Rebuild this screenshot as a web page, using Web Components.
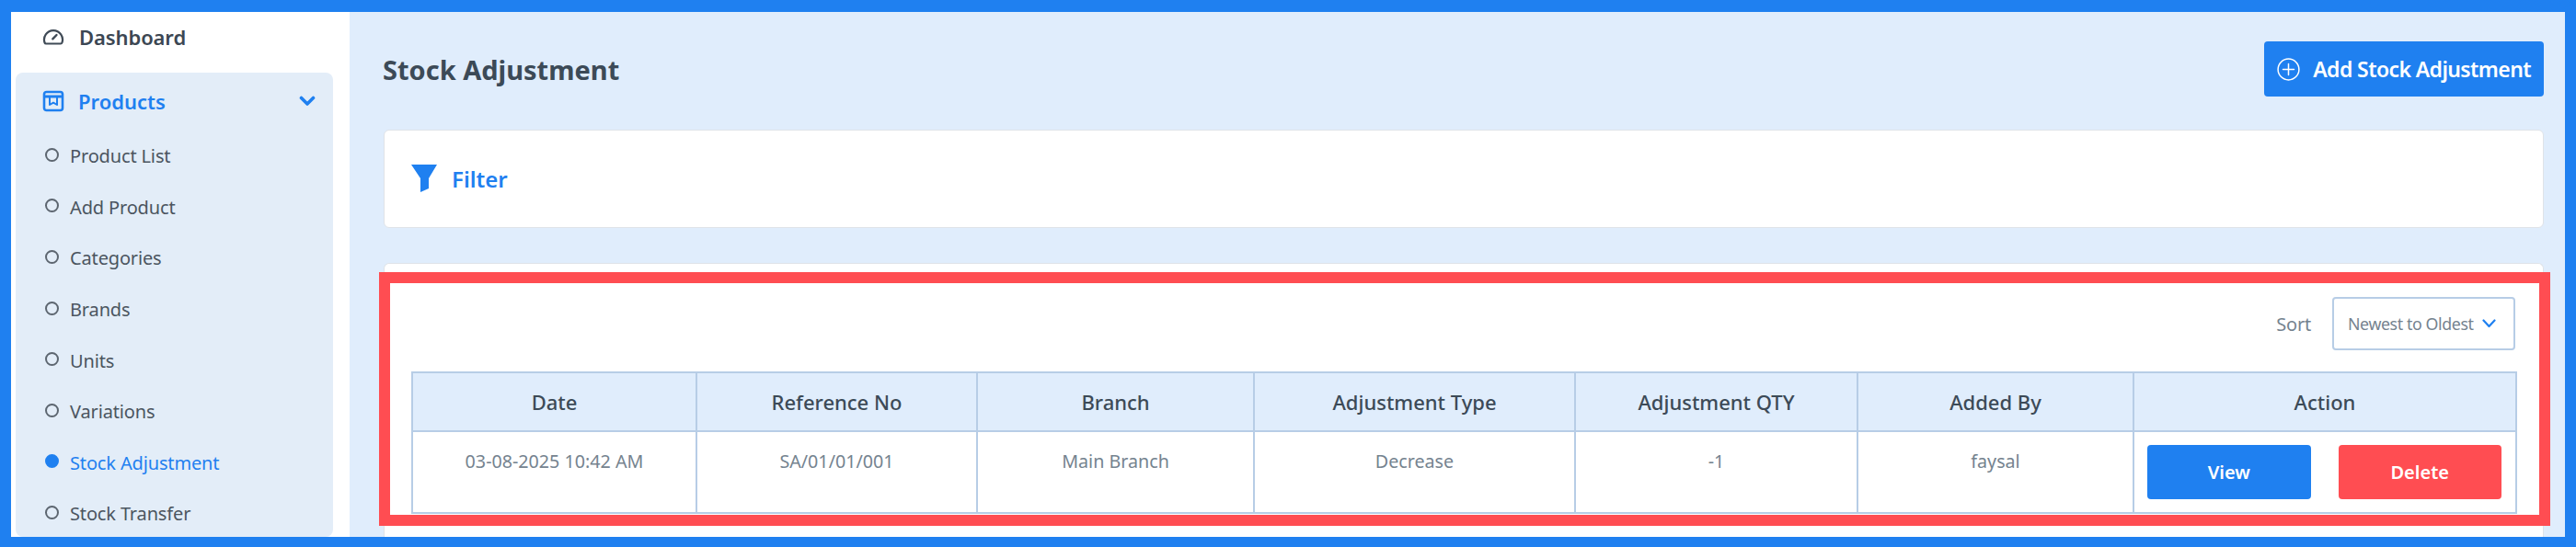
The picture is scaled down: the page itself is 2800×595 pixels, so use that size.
<!DOCTYPE html>
<html>
<head>
<meta charset="utf-8">
<title>Stock Adjustment</title>
<style>
  html, body { margin: 0; height: 100%; overflow: hidden; background: #1f80f0; }
  body { font-family: "Noto Sans", "Open Sans", sans-serif; }
</style>
</head>
<body>

<app-shell>
  <side-bar slot="side">
    <nav-link icon="gauge">Dashboard</nav-link>
    <nav-group label="Products">
      <sub-link>Product List</sub-link>
      <sub-link>Add Product</sub-link>
      <sub-link>Categories</sub-link>
      <sub-link>Brands</sub-link>
      <sub-link>Units</sub-link>
      <sub-link>Variations</sub-link>
      <sub-link active>Stock Adjustment</sub-link>
      <sub-link>Stock Transfer</sub-link>
    </nav-group>
  </side-bar>

  <page-header title="Stock Adjustment" action="Add Stock Adjustment"></page-header>
  <filter-card>Filter</filter-card>
  <stock-table></stock-table>
  <highlight-box></highlight-box>
</app-shell>

<script>
const ICONS = {
  gauge: `<svg width="24" height="20" viewBox="0 0 24 20" fill="none" stroke="#3f4a56" stroke-width="2.200" stroke-linecap="round" stroke-linejoin="round">
      <path d="M4 17.500h16a1.500 1.500 0 0 0 1.400-1A10 10 0 1 0 2.600 16.500a1.500 1.500 0 0 0 1.400 1z"/>
      <path d="M11.300 12.300l4.200-4.300" stroke-width="2.400"/>
    </svg>`,
  box: `<svg width="24" height="24" viewBox="0 0 24 24" fill="none" stroke="#1f80f0" stroke-width="2.600" stroke-linejoin="round">
      <rect x="2" y="2" width="20" height="20" rx="2.500"/>
      <path d="M2 7h20" stroke-width="2.800"/>
      <path d="M8 7.500v8.500l4-2.300 4 2.300V7.500" stroke-width="2"/>
    </svg>`,
  chevron: `<svg width="18" height="12" viewBox="0 0 18 12" fill="none" stroke="#1f80f0" stroke-width="3.600" stroke-linecap="round" stroke-linejoin="round"><path d="M2.500 2.500L9 9l6.500-6.500"/></svg>`,
  chevronThin: `<svg width="15" height="10" viewBox="0 0 15 10" fill="none" stroke="#1f80f0" stroke-width="2.200" stroke-linecap="round" stroke-linejoin="round"><path d="M1.500 1.500L7.500 8l6-6.500"/></svg>`,
  plus: `<svg width="25" height="25" viewBox="0 0 25 25" fill="none" stroke="#fff" stroke-width="1.500" stroke-linecap="round"><circle cx="12.500" cy="12.500" r="11.400"/><path d="M12.500 6.500v12M6.500 12.500h12"/></svg>`,
  funnel: `<svg width="30" height="31" viewBox="0 0 30 31" fill="#1f80f0"><path d="M1 0h28L20 15v11l-9 4V15z"/></svg>`
};

class AppShell extends HTMLElement {
  constructor() {
    super();
    this.attachShadow({ mode: 'open' });
    this.shadowRoot.innerHTML = `
      <style>
        :host {
          display: flex;
          position: relative;
          box-sizing: border-box;
          width: 2800px;
          height: 595px;
          border-style: solid;
          border-color: #1f80f0;
          border-width: 13px 12px 11px 12px;
          overflow: hidden;
        }
        .side { width: 368px; flex: none; background: #fff; }
        main {
          flex: 1;
          min-width: 0;
          background: #e0edfc;
          padding: 32px 23px 0 37px;
          display: flex;
          flex-direction: column;
        }
        .topline {
          position: absolute;
          left: -12px; right: -12px; top: -13px;
          height: 1px;
          background: #5fa4f4;
        }
      </style>
      <div class="topline"></div>
      <div class="side"><slot name="side"></slot></div>
      <main><slot></slot></main>
    `;
  }
}

class SideBar extends HTMLElement {
  constructor() {
    super();
    this.attachShadow({ mode: 'open' });
    this.shadowRoot.innerHTML = `
      <style>
        :host { display: flex; flex-direction: column; height: 100%; }
      </style>
      <slot></slot>
    `;
  }
}

class NavLink extends HTMLElement {
  constructor() {
    super();
    this.attachShadow({ mode: 'open' });
    this.shadowRoot.innerHTML = `
      <style>
        :host {
          display: flex;
          align-items: center;
          gap: 16px;
          height: 54px;
          padding: 0 0 0 34px;
          font-size: 22px;
          font-weight: 600;
          letter-spacing: -0.100px;
          color: #3c4753;
        }
        .ic { display: flex; width: 24px; }
      </style>
      <span class="ic">${ICONS[this.getAttribute('icon')] || ''}</span>
      <span><slot></slot></span>
    `;
  }
}

class NavGroup extends HTMLElement {
  constructor() {
    super();
    this.attachShadow({ mode: 'open' });
    this.shadowRoot.innerHTML = `
      <style>
        :host {
          display: block;
          flex: 1;
          margin: 12px 18px 0 5px;
          background: #e3edf8;
          border-radius: 8px;
          overflow: hidden;
        }
        .head {
          display: flex;
          align-items: center;
          gap: 15px;
          height: 62px;
          padding: 0 19px 0 29px;
          font-size: 22px;
          font-weight: 600;
          color: #1f80f0;
        }
        .ic { display: flex; }
        .label { flex: 1; }
        .list { display: grid; grid-auto-rows: 55.6px; padding-top: 1px; }
      </style>
      <div class="head">
        <span class="ic">${ICONS.box}</span>
        <span class="label">${this.getAttribute('label')}</span>
        <span class="ic">${ICONS.chevron}</span>
      </div>
      <div class="list"><slot></slot></div>
    `;
  }
}

class SubLink extends HTMLElement {
  constructor() {
    super();
    this.attachShadow({ mode: 'open' });
    this.shadowRoot.innerHTML = `
      <style>
        :host {
          display: flex;
          align-items: center;
          gap: 12px;
          padding-left: 32px;
          font-size: 20px;
          letter-spacing: -0.150px;
          color: #4b5560;
        }
        :host([active]) { color: #1f80f0; }
        .dot {
          width: 15px; height: 15px;
          box-sizing: border-box;
          border: 2px solid #5d6670;
          border-radius: 50%;
          margin-top: -3px;
        }
        :host([active]) .dot { background: #1f80f0; border-color: #1f80f0; }
      </style>
      <span class="dot"></span>
      <span><slot></slot></span>
    `;
  }
}

class PageHeader extends HTMLElement {
  constructor() {
    super();
    this.attachShadow({ mode: 'open' });
    this.shadowRoot.innerHTML = `
      <style>
        :host {
          display: flex;
          align-items: center;
          justify-content: space-between;
          height: 60px;
          margin-bottom: 36px;
        }
        h1 { margin: 0 0 0 -1px; font-size: 29px; font-weight: 700; color: #3c4a57; }
        button {
          display: flex;
          align-items: center;
          gap: 14px;
          height: 60px;
          box-sizing: border-box;
          padding: 0 14px;
          border: 0;
          border-radius: 4px;
          background: #1f80f0;
          color: #fff;
          font: 600 23px "Noto Sans", sans-serif;
          letter-spacing: -0.600px;
          white-space: nowrap;
        }
      </style>
      <h1>${this.getAttribute('title')}</h1>
      <button>${ICONS.plus}<span>${this.getAttribute('action')}</span></button>
    `;
  }
}

class FilterCard extends HTMLElement {
  constructor() {
    super();
    this.attachShadow({ mode: 'open' });
    this.shadowRoot.innerHTML = `
      <style>
        :host {
          display: flex;
          align-items: center;
          gap: 15px;
          box-sizing: border-box;
          height: 107px;
          padding: 0 0 0 28px;
          margin-bottom: 38px;
          background: #fff;
          border: 1px solid #dfe3e8;
          border-radius: 6px;
          font-size: 24px;
          font-weight: 600;
          color: #1f80f0;
        }
        .ic { display: flex; }
      </style>
      <span class="ic">${ICONS.funnel}</span>
      <span><slot></slot></span>
    `;
  }
}

class StockTable extends HTMLElement {
  constructor() {
    super();
    this.attachShadow({ mode: 'open' });
    const heads = ['Date', 'Reference No', 'Branch', 'Adjustment Type', 'Adjustment QTY', 'Added By', 'Action'];
    const widths = [309, 305, 301, 349, 307, 300, 416];
    const row = ['03-08-2025 10:42 AM', 'SA/01/01/001', 'Main Branch', 'Decrease', '-1', 'faysal'];
    this.shadowRoot.innerHTML = `
      <style>
        :host {
          display: block;
          flex: 1;
          min-height: 0;
          box-sizing: border-box;
          padding: 36px 30px 0 29px;
          background: #fff;
          border: 1px solid #dfe3e8;
          border-bottom: 0;
          border-radius: 6px 6px 0 0;
          color: #75838f;
        }
        .sort {
          display: flex;
          align-items: center;
          justify-content: flex-end;
          gap: 23px;
          height: 58px;
          margin-bottom: 23px;
          font-size: 20px;
          letter-spacing: -0.200px;
        }
        .select {
          display: flex;
          align-items: center;
          justify-content: space-between;
          box-sizing: border-box;
          width: 199px;
          height: 58px;
          padding: 0 19px 0 15px;
          border: 2px solid #b7cde6;
          border-radius: 4px;
          font-size: 17.800px;
          letter-spacing: -0.400px;
          white-space: nowrap;
        }
        .select span { display: flex; }
        table {
          border-collapse: collapse;
          table-layout: fixed;
          width: 2287px;
        }
        th, td {
          box-sizing: border-box;
          border: 2px solid #b7cde6;
          text-align: center;
          padding: 0;
        }
        th {
          height: 64px;
          background: #e0edfc;
          font-size: 22px;
          font-weight: 500;
          color: #3c4a57;
        }
        td {
          height: 89px;
          font-size: 19.700px;
          vertical-align: top;
          padding-top: 18px;
        }
        td.act { padding: 14px 15px 0 14px; }
        .btns { display: flex; gap: 30px; }
        .btn {
          flex: 1;
          display: flex;
          align-items: center;
          justify-content: center;
          height: 59px;
          border-radius: 4px;
          color: #fff;
          font-size: 20px;
          font-weight: 600;
          background: #1f80f0;
        }
        .btn.del { background: #ff4d52; }
      </style>
      <div class="sort">
        <span>Sort</span>
        <div class="select"><span>Newest to Oldest</span><span>${ICONS.chevronThin}</span></div>
      </div>
      <table>
        <colgroup>${widths.map(w => `<col style="width:${w}px">`).join('')}</colgroup>
        <thead><tr>${heads.map(h => `<th>${h}</th>`).join('')}</tr></thead>
        <tbody>
          <tr>
            ${row.map(c => `<td>${c}</td>`).join('')}
            <td class="act"><div class="btns"><span class="btn">View</span><span class="btn del">Delete</span></div></td>
          </tr>
        </tbody>
      </table>
    `;
  }
}

// red annotation frame drawn over the table card
class HighlightBox extends HTMLElement {
  constructor() {
    super();
    this.attachShadow({ mode: 'open' });
    this.shadowRoot.innerHTML = `
      <style>
        :host {
          position: absolute;
          left: 400px;
          top: 283px;
          width: 2360px;
          height: 276px;
          box-sizing: border-box;
          border: 12px solid #ff4d52;
          pointer-events: none;
        }
      </style>
    `;
  }
}

customElements.define('app-shell', AppShell);
customElements.define('side-bar', SideBar);
customElements.define('nav-link', NavLink);
customElements.define('nav-group', NavGroup);
customElements.define('sub-link', SubLink);
customElements.define('page-header', PageHeader);
customElements.define('filter-card', FilterCard);
customElements.define('stock-table', StockTable);
customElements.define('highlight-box', HighlightBox);
</script>
</body>
</html>
